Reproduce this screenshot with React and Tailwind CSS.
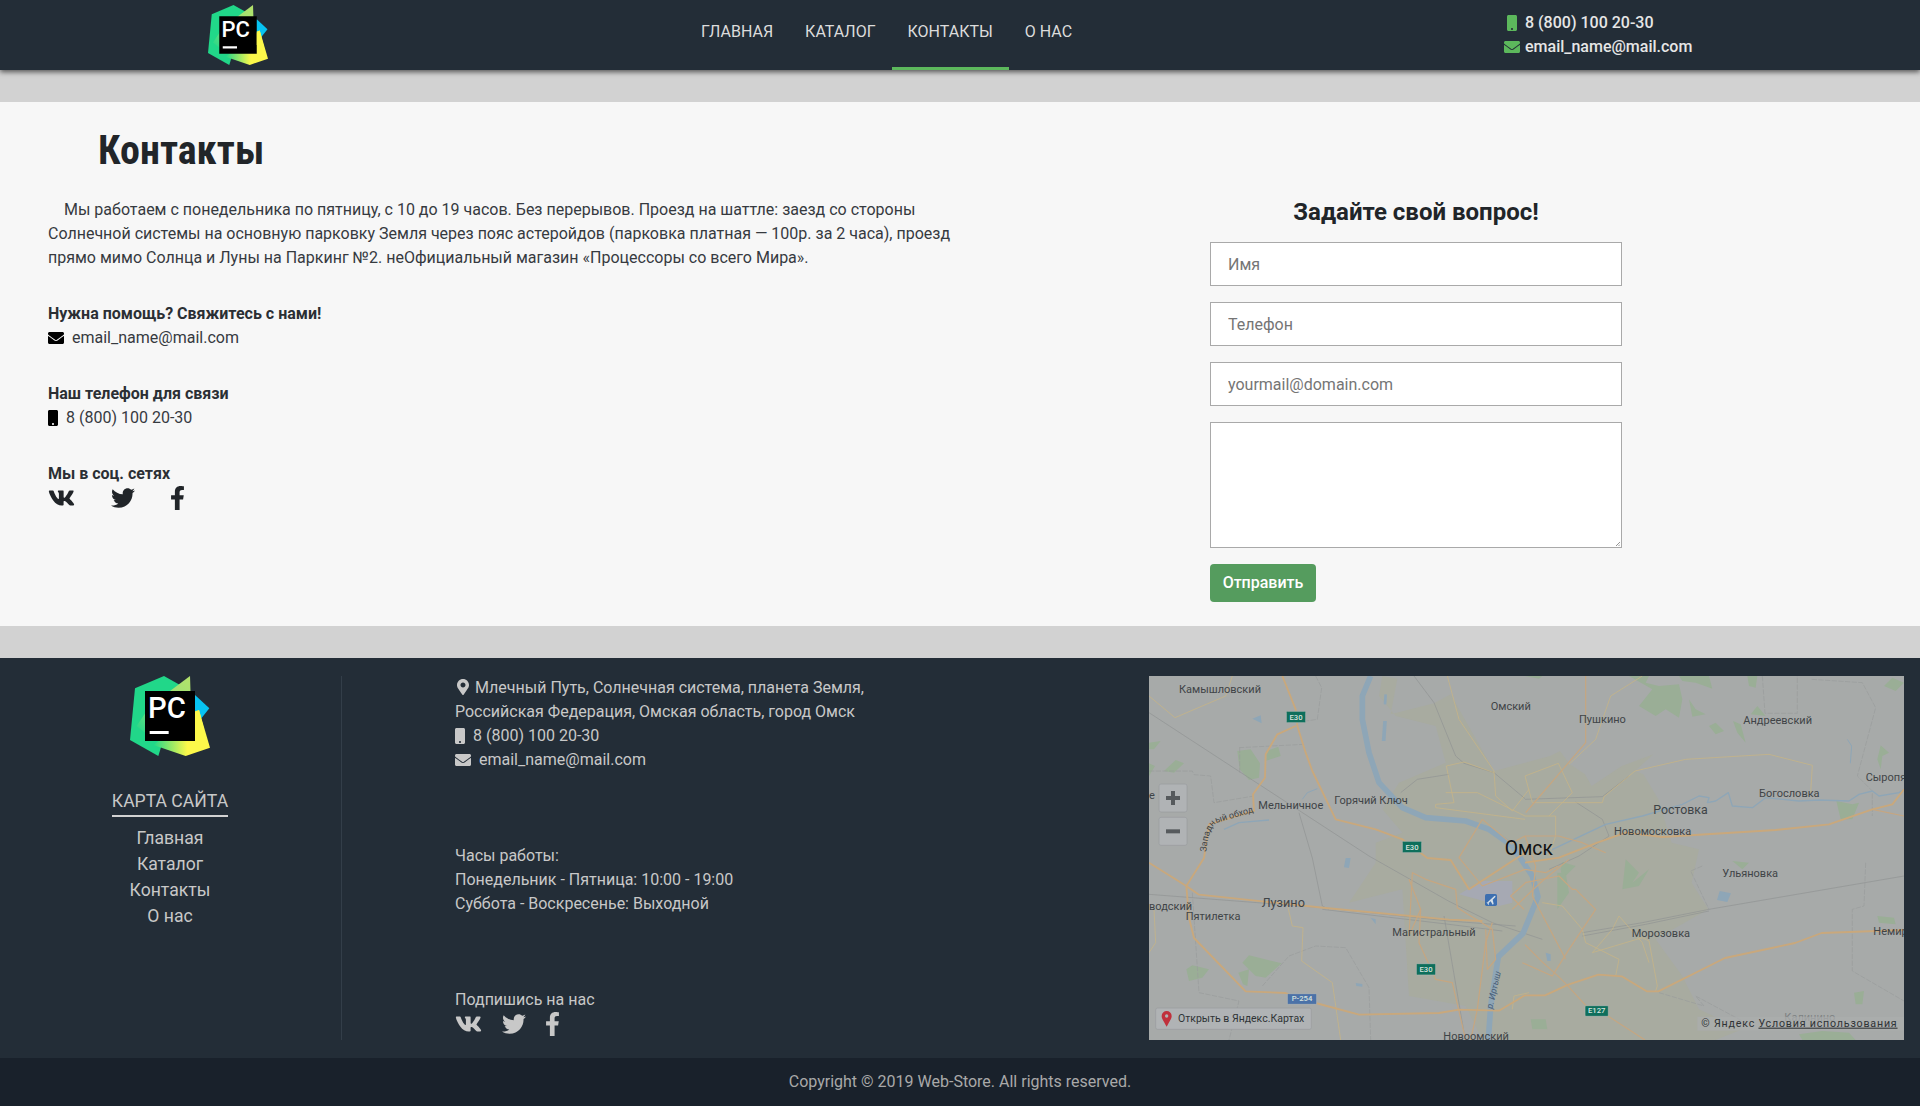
import { FaVk, FaTwitter, FaFacebookF, FaEnvelope, FaMobile, FaMapMarkerAlt } from 'react-icons/fa';

const menu = ['Главная', 'Каталог', 'Контакты', 'О нас'];

function Logo({ className }) {
  return (
    <svg viewBox="0 0 240 240" className={className}>
      <defs>
        <linearGradient id="pcGreen" x1="0" y1="1" x2="1" y2="0">
          <stop offset="0" stopColor="#21d789" />
          <stop offset="0.45" stopColor="#8fe27a" />
          <stop offset="1" stopColor="#b5e26a" />
        </linearGradient>
        <linearGradient id="pcYellow" x1="0" y1="0" x2="1" y2="0">
          <stop offset="0" stopColor="#21d789" />
          <stop offset="0.6" stopColor="#fcf84a" />
        </linearGradient>
      </defs>
      <polygon points="195,57 238,97 210,132 170,90" fill="#07c3f2" />
      <polygon points="15,37 102,0 150,27 85,240 0,192" fill="#21d789" />
      <polygon points="180,0 182,60 45,170 20,150 60,90" fill="url(#pcGreen)" />
      <polygon points="70,207 207,102 240,215 167,240" fill="url(#pcYellow)" />
      <rect x="45" y="45" width="150" height="150" fill="#000" />
      <polygon points="195,106 207,102 222,160 195,160" fill="#fcf84a" />
      <text x="54" y="127" fontSize="88" fontWeight="500" fill="#fff" fontFamily="Roboto, sans-serif">PC</text>
      <rect x="59" y="165" width="57" height="9" fill="#fff" />
    </svg>
  );
}

function Socials({ gap }) {
  return (
    <div className={`flex items-center h-6 ${gap}`}>
      <FaVk className="w-[27px] h-6" />
      <FaTwitter className="w-6 h-6" />
      <FaFacebookF className="w-[15px] h-6" />
    </div>
  );
}

function Shield({ x, y, w, h = 34, text, fill = '#0e6f5c' }) {
  return (
    <g>
      <rect x={x} y={y} width={w} height={h} rx="3" fill={fill} stroke="#b4b8b4" strokeWidth="2" />
      <text x={x + w / 2} y={y + h - 9} textAnchor="middle" fontSize="23" fontWeight="500" fill="#d8e2de">{text}</text>
    </g>
  );
}

function Label({ x, y, size = 33, children, fill = '#3f4447' }) {
  return <text x={x} y={y} fontSize={size} fill={fill}>{children}</text>;
}

// карта рисуется в координатах 3x, viewBox потом ужимает её до 755x364
function YandexMap() {
  const road = { fill: 'none', stroke: '#c9a87c', strokeWidth: 5.5, strokeLinejoin: 'round' };
  const thin = { fill: 'none', stroke: '#c4b388', strokeWidth: 2.5, strokeLinejoin: 'round' };
  const mid = { fill: 'none', stroke: '#c6a680', strokeWidth: 3.5, strokeLinejoin: 'round' };
  const rail = { fill: 'none', stroke: '#8f9393', strokeWidth: 2 };
  const dash = { fill: 'none', stroke: '#989c9c', strokeWidth: 2, strokeDasharray: '16 4' };
  const water = { fill: 'none', stroke: '#8ea6b7', strokeLinejoin: 'round' };
  const green = '#9aae96';

  return (
    <svg viewBox="0 0 2265 1092" className="w-[755px] h-[364px] shrink-0 bg-[#a7aaa9]" fontFamily="Roboto, sans-serif">
      {/* городская зона */}
      <polygon fill="#a8aba0" points="700,0 745,8 725,115 855,82 905,55 1035,285 1203,240 1233,225 1263,265 1308,295 1328,330 1418,270 1513,235 1458,285 1483,295 1528,370 1568,500 1650,520 1628,620 1678,700 1520,790 1600,900 1650,1000 1780,1060 1700,1092 1000,1092 950,990 780,960 760,640 600,680 680,560 680,500 760,470 700,400 750,320 890,260 860,150 740,120 690,60" />
      {/* зелень */}
      <g fill={green}>
        <polygon points="265,225 305,220 333,262 330,305 300,312 272,280" />
        <polygon points="352,225 388,212 395,240 352,254" />
        <polygon points="0,200 35,195 15,220 0,220" />
        <polygon points="45,285 80,252 105,262 75,290" />
        <polygon points="0,262 18,270 0,300" />
        <polygon points="1128,0 1180,0 1170,8" />
        <polygon points="1440,0 1500,0 1490,20 1530,30 1590,25 1600,70 1590,125 1550,100 1520,120 1470,90 1510,40" />
        <polygon points="1590,0 1680,0 1690,38 1640,20 1600,15" />
        <polygon points="1620,70 1640,100 1670,115 1630,122" />
        <polygon points="1680,150 1700,140 1725,165 1700,175" />
        <polygon points="1752,135 1775,145 1790,200 1765,170" />
        <polygon points="1795,0 1825,0 1820,35 1800,30" />
        <polygon points="1805,115 1825,90 1850,120" />
        <polygon points="2185,250 2195,208 2220,230 2200,240 2195,280" />
        <polygon points="2062,375 2110,385 2130,380 2110,430 2075,430" />
        <polygon points="2205,30 2230,5 2265,20 2240,45" />
        <polygon points="1950,1075 2020,1065 2100,1070 2120,1092 1960,1092" />
        <polygon points="280,860 300,838 398,862 350,905 320,900" />
        <polygon points="268,890 300,880 295,930 282,925" />
        <polygon points="112,880 130,868 180,880 160,905 120,915" />
        <polygon points="1430,550 1470,590 1450,620 1500,580 1470,630 1420,640" />
        <polygon points="1240,558 1280,570 1240,610 1235,580" />
        <polygon points="2115,950 2145,945 2140,985 2120,985" />
        <polygon points="1750,555 1800,560 1780,580" />
        <polygon points="2185,720 2235,725 2240,745 2190,740" />
        <polygon points="1145,1030 1190,1030 1195,1060 1150,1060" />
        <polygon points="1225,590 1250,590 1260,650 1225,700" />
      </g>
      {/* аэропорт */}
      <polygon fill="#a6a9b3" points="930,655 1000,615 1090,615 1090,680 1050,690 985,670" />
      {/* границы */}
      <polyline {...dash} points="270,215 465,205" />
      <polyline {...dash} points="272,215 272,290" />
      <polyline {...dash} points="0,285 130,285 135,296 185,300 195,380 315,360" />
      <polyline {...dash} points="500,0 518,35 505,130 440,140" />
      <polyline {...dash} points="1840,0 1848,112 1945,112 1945,0" />
      <polyline {...dash} points="1988,10 2140,20 2180,95 2125,300 2170,345 2170,420" />
      <polyline {...dash} points="130,650 150,950 270,975 240,1092" />
      <polyline {...dash} points="340,930 420,840 500,810 590,815 660,935 665,1092" />
      <polyline {...dash} points="2150,560 2145,690 2110,700 2110,885 2265,975" />
      <polyline {...dash} points="1660,570 1625,585 1680,700" />
      <polyline {...dash} points="1530,950 1665,990 1640,960 1780,1035" />
      {/* ж/д и серые дороги */}
      <polyline {...rail} points="0,110 660,540 900,676 1030,740 1180,790" />
      <polyline {...rail} points="0,655 520,695 900,735 1100,750" />
      <polyline {...rail} points="520,700 900,745 1060,765" />
      <polyline {...rail} points="450,410 490,546 520,690 540,700" />
      <polyline {...rail} points="795,0 855,80 920,240 945,262 1035,290 1128,368" />
      <polyline {...rail} points="885,720 945,1070" />
      <polyline {...rail} points="1128,370 1360,362 1440,300" />
      <polyline {...rail} points="1280,378 1360,430 1380,480 1290,540 1200,580" />
      <polyline {...rail} points="1300,770 1480,740 1680,700 2265,600" />
      <polyline {...rail} points="1300,780 1490,745 1680,705" />
      <polyline {...rail} points="755,350 805,310 900,295" />
      {/* вода */}
      <g>
        <polyline {...water} strokeWidth="17" points="665,0 640,60 640,130 660,230 690,320 760,395 830,425 950,435 1020,460 1090,510 1150,600 1167,662 1122,772 1048,842 1025,990 1018,1092" />
        <polyline {...water} strokeWidth="8" points="710,55 708,85" />
        <polyline {...water} strokeWidth="11" points="708,135 704,195" />
        <polyline {...water} strokeWidth="4" points="225,460 270,440 360,432" />
        <polyline {...water} strokeWidth="3" points="460,370 475,350 505,338" />
        <polyline {...water} strokeWidth="4" points="1190,530 1370,445 1480,420 1600,385 1650,360 1680,365 1675,380 1700,375 1738,350 1750,390 1810,395 1850,365 1950,375 2010,372 2100,375 2130,355 2170,345 2190,360 2250,350 2265,340" />
        <polyline {...water} strokeWidth="3" points="2095,190 2108,210 2104,262" />
        <polygon fill="#8ea6b7" points="310,128 335,118 338,142" />
        <polygon fill="#8ea6b7" points="1712,645 1746,652 1735,678 1704,672" />
        <polygon fill="#8ea6b7" points="590,546 605,546 600,576 585,574" />
        <polygon fill="#8ea6b7" points="620,921 640,924 640,932 622,930" />
        <polygon fill="#8ea6b7" points="665,725 680,730 680,745" />
        <polygon fill="#8ea6b7" points="1190,830 1205,835 1205,855 1195,855" />
      </g>
      {/* второстепенные дороги */}
      <polyline {...thin} points="0,60 78,125 230,60 250,0" />
      <polyline {...thin} points="895,0 930,130 1035,285 1040,360 1090,405 1140,340" />
      <polyline {...thin} points="892,270 945,258 1035,290" />
      <polyline {...thin} points="892,270 915,380 860,385 860,395 1128,430" />
      <polyline {...thin} points="890,350 985,350 1128,420" />
      <polyline {...thin} points="1128,420 1220,420 1220,480 1200,540" />
      <polyline {...thin} points="1128,300 1228,262 1270,350 1200,420" />
      <polyline {...thin} points="1128,300 1150,380 1360,380 1365,362 1458,285 1610,250 1860,235 1990,268 1985,350" />
      <polyline {...thin} points="1480,0 1385,60 1340,190 1260,265" />
      <polyline {...thin} points="416,690 430,750 462,755 458,855 550,920 575,1092" />
      <polyline {...thin} points="1330,830 1390,760 1410,720 1480,800 1500,860" />
      <polyline {...thin} points="1330,830 1480,785 1500,795 1525,930 1520,945" />
      <polyline {...thin} points="1180,680 1240,690 1300,760 1310,800 1410,850 1400,900" />
      <polyline {...thin} points="1090,1000 1095,960 1140,950" />
      <polyline {...thin} points="0,830 20,800 15,700" />
      <polyline {...mid} points="780,610 815,700 810,800 860,910 910,920 945,1070 950,1092" />
      <polyline {...mid} points="815,700 780,780 790,590 830,610 920,640 925,695 1030,760 1040,850 1015,880 1010,760" />
      <polyline {...mid} points="1000,430 930,545 1000,630 1128,580 1190,590 1228,570" />
      <polyline {...mid} points="1030,740 1010,800 985,1000 965,1092" />
      <polyline {...mid} points="1090,500 1128,480 1228,480 1300,500 1370,530" />
      <polyline {...mid} points="1128,480 1160,570 1150,660 1250,850" />
      <polyline {...mid} points="1000,430 1090,505" />
      <polyline {...mid} points="1128,620 1230,600 1270,640 1280,640 1340,700 1260,820 1210,900 1120,860" />
      <polyline {...mid} points="1090,700 1180,615 1260,550" />
      <polyline {...mid} points="1130,620 1085,660 1125,700" />
      <polyline {...mid} points="1130,410 1160,375 1310,200 1310,0" />
      <polyline {...mid} points="2170,400 2265,420" />
      {/* трассы */}
      <polyline {...road} points="400,0 440,100 445,150 470,230 490,285 560,430 680,460 760,490 835,546 905,552 960,640 1090,555 1128,530" />
      <polyline {...road} points="440,150 385,175 350,235 348,305 312,355 315,405 180,445 165,546 112,630 120,726 135,786 290,946 410,951 500,981 630,1016 870,1011 930,1001 1050,1004 1128,958 1188,958 1258,926 1348,896 1418,901 1493,946 1528,946 1728,846 1938,801 2018,771 2265,762" />
      <polyline {...road} points="0,560 112,630 150,656 340,676 530,696 900,731 1000,735" />
      <polyline {...road} points="1128,560 1230,545 1345,500 1430,470 1540,483 1880,462 2040,445 2170,400 2230,385 2265,340" />
      <polyline {...mid} points="1128,806 1178,856 1228,901 1253,926 1308,986 1378,1021 1488,1092" />
      {/* подписи */}
      <Label x="90" y="52">Камышловский</Label>
      <Label x="328" y="400">Мельничное</Label>
      <Label x="556" y="383">Горячий Ключ</Label>
      <Label x="1025" y="103">Омский</Label>
      <Label x="0" y="368">е</Label>
      <path id="zapadny" d="M172 528 Q178 455 205 440 L325 405" fill="none" />
      <text fontSize="27" fill="#3f4447">
        <textPath href="#zapadny">Западный обход</textPath>
      </text>
      <Label x="1290" y="140">Пушкино</Label>
      <Label x="1783" y="143">Андреевский</Label>
      <Label x="2150" y="315">Сыропя</Label>
      <Label x="1830" y="362">Богословка</Label>
      <Label x="1513" y="415" size="37">Ростовка</Label>
      <Label x="1395" y="478">Новомосковка</Label>
      <Label x="1067" y="537" size="58" fill="#111">Омск</Label>
      <Label x="0" y="701">водский</Label>
      <Label x="110" y="731">Пятилетка</Label>
      <Label x="338" y="693" size="38">Лузино</Label>
      <Label x="730" y="779">Магистральный</Label>
      <Label x="883" y="1091">Новоомский</Label>
      <Label x="1720" y="604">Ульяновка</Label>
      <Label x="1448" y="783">Морозовка</Label>
      <Label x="2173" y="776">Немир</Label>
      <Label x="1906" y="1036" fill="#7d8182">Калинино</Label>
      <text fontSize="27" fill="#4a5f78" transform="translate(1030 1000) rotate(-77)" fontStyle="italic">р. Иртыш</text>
      {/* щиты */}
      <Shield x={412} y={106} w={58} text="E30" />
      <Shield x={760} y={496} w={58} text="E30" />
      <Shield x={802} y={863} w={58} text="E30" />
      <Shield x={1308} y={989} w={70} h={32} text="E127" />
      <Shield x={415} y={953} w={88} h={32} text="P-254" fill="#4b72a8" />
      {/* значок аэропорта */}
      <rect x="1008" y="654" width="36" height="36" rx="5" fill="#3d6fb0" />
      <path d="M1014 680 l22 -20 q5 -2 3 3 l-8 8 3 13 -3 2 -6 -10 -6 5 1 4 -2 2 -3 -5 -5 -3 z" fill="#d7e0e8" />
      {/* кнопки масштаба */}
      <g>
        <rect x="30" y="324" width="84" height="84" rx="6" fill="#b0b3b5" stroke="#999c9e" strokeWidth="2" />
        <rect x="51" y="360" width="42" height="12" fill="#565a5d" />
        <rect x="66" y="345" width="12" height="42" fill="#565a5d" />
        <rect x="30" y="424" width="84" height="84" rx="6" fill="#b0b3b5" stroke="#999c9e" strokeWidth="2" />
        <rect x="51" y="460" width="42" height="12" fill="#565a5d" />
      </g>
      {/* открыть в картах */}
      <rect x="20" y="996" width="467" height="64" rx="6" fill="#b0b3b5" stroke="#999c9e" strokeWidth="2" />
      <path d="M53 1052 C42 1032 38 1028 38 1020 a15 15 0 0 1 30 0 C68 1028 64 1032 53 1052z" fill="#c0303c" />
      <circle cx="53" cy="1020" r="5" fill="#b0b3b5" />
      <Label x="87" y="1037" size="31.5" fill="#2f3336">Открыть в Яндекс.Картах</Label>
      {/* копирайт */}
      <rect x="1645" y="1022" width="620" height="42" fill="#abaeae" fillOpacity="0.7" />
      <text x="1657" y="1052" fontSize="32" letterSpacing="2.4" fill="#2f3336">© Яндекс <tspan textDecoration="underline">Условия использования</tspan></text>
    </svg>
  );
}

export default function App() {
  return (
    <div className="font-[Roboto,sans-serif] text-base text-[#212529] bg-[#d2d2d2]">
      <header className="relative z-10 flex h-[70px] bg-[#232d37] shadow-[0_2px_5px_rgba(0,0,0,0.6)]">
        <div className="w-[685px] pl-[208px] pt-[5px] shrink-0">
          <Logo className="w-[60px] h-[60px]" />
        </div>
        <nav className="flex w-[819px] shrink-0 text-[#dcdcdc] uppercase">
          {menu.map((item) => (
            <a
              key={item}
              className={`px-4 h-[70px] pt-[20px] ${item === 'Контакты' ? 'border-b-[3px] border-[#5cb85c]' : ''}`}
            >
              {item}
            </a>
          ))}
        </nav>
        <div className="pt-[11px] text-[#e6e6e6] font-medium leading-6">
          <div className="flex items-center gap-[5px]">
            <span className="w-4 flex justify-center text-[#5cb85c]"><FaMobile /></span>
            8 (800) 100 20-30
          </div>
          <div className="flex items-center gap-[5px]">
            <span className="w-4 flex justify-center text-[#5cb85c]"><FaEnvelope /></span>
            email_name@mail.com
          </div>
        </div>
      </header>

      <div className="h-8" />

      <main className="flex h-[524px] bg-[#f7f7f7]">
        <section className="w-[960px] shrink-0 pl-12 pt-[25px]">
          <h1 className="pl-[50px] mb-[23px] text-[40px] leading-[48px] font-bold [font-stretch:condensed]">Контакты</h1>
          <p className="w-[912px] indent-4 leading-6 mb-8 text-[#363a3f]">
            Мы работаем с понедельника по пятницу, с 10 до 19 часов. Без перерывов. Проезд на шаттле: заезд со стороны Солнечной системы на основную парковку Земля через пояс астеройдов (парковка платная — 100р. за 2 часа), проезд прямо мимо Солнца и Луны на Паркинг №2. неОфициальный магазин «Процессоры со всего Мира».
          </p>
          <div className="leading-6 mb-8">
            <div className="font-bold text-[#2b2f34]">Нужна помощь? Свяжитесь с нами!</div>
            <div className="flex items-center gap-[8px] text-[#363a3f]"><FaEnvelope className="text-black" />email_name@mail.com</div>
          </div>
          <div className="leading-6 mb-8">
            <div className="font-bold text-[#2b2f34]">Наш телефон для связи</div>
            <div className="flex items-center gap-[8px] text-[#363a3f]"><FaMobile className="text-black w-2.5" />8 (800) 100 20-30</div>
          </div>
          <div className="leading-6">
            <div className="font-bold text-[#2b2f34]">Мы в соц. сетях</div>
            <Socials gap="gap-[35.5px]" />
          </div>
        </section>
        <section className="pl-[250px] pt-[96px] w-[662px] shrink-0">
          <h2 className="text-2xl leading-7 font-bold text-center mb-4">Задайте свой вопрос!</h2>
          <form className="flex flex-col gap-4">
            <input placeholder="Имя" className="h-11 px-[17px] bg-white border border-[#a9a9a9] placeholder:text-[#757575]" />
            <input placeholder="Телефон" className="h-11 px-[17px] bg-white border border-[#a9a9a9] placeholder:text-[#757575]" />
            <input placeholder="yourmail@domain.com" className="h-11 px-[17px] bg-white border border-[#a9a9a9] placeholder:text-[#757575]" />
            <div className="relative h-[126px]">
              <textarea className="block w-full h-full resize-none px-[17px] py-2 bg-white border border-[#a9a9a9]" />
              {/* маленький уголок вместо штатного ресайза */}
              <svg viewBox="0 0 4 4" className="absolute right-[2px] bottom-[2px] w-1 h-1">
                <path d="M0 4 L4 0 M2.5 4 L4 2.5" stroke="#666" strokeWidth="0.7" />
              </svg>
            </div>
            <button type="button" className="w-[106px] h-[38px] rounded bg-[#559c5e] text-white font-medium">Отправить</button>
          </form>
        </section>
      </main>

      <div className="h-8" />

      <footer className="flex h-[400px] py-[18px] bg-[#232d37] text-[#c8c8c8]">
        <div className="w-[342px] shrink-0 pr-px border-r border-[#333e49] flex flex-col items-center">
          <Logo className="w-20 h-20" />
          <div className="mt-[31px] text-[17.6px] leading-7 border-b-2 border-[#d2d2d2] uppercase">Карта сайта</div>
          <ul className="mt-2 text-[17.6px] leading-[26px] text-center">
            {menu.map((item) => <li key={item}>{item}</li>)}
          </ul>
        </div>
        <div className="w-[807px] shrink-0 pl-[113px] leading-6">
          <div className="mb-[72px]">
            <div><FaMapMarkerAlt className="inline mr-1 -mt-1" />Млечный Путь, Солнечная система, планета Земля,</div>
            <div>Российская Федерация, Омская область, город Омск</div>
            <div className="flex items-center gap-[8px]"><FaMobile className="w-2.5" />8 (800) 100 20-30</div>
            <div className="flex items-center gap-[8px]"><FaEnvelope />email_name@mail.com</div>
          </div>
          <div className="mb-[72px]">
            <div>Часы работы:</div>
            <div>Понедельник - Пятница: 10:00 - 19:00</div>
            <div>Суббота - Воскресенье: Выходной</div>
          </div>
          <div>Подпишись на нас</div>
          <Socials gap="gap-[19.5px]" />
        </div>
        <YandexMap />
      </footer>

      <div className="h-12 flex items-center justify-center bg-[#19212b] text-[#a9a9a9]">
        Copyright © 2019 Web-Store. All rights reserved.
      </div>
    </div>
  );
}
